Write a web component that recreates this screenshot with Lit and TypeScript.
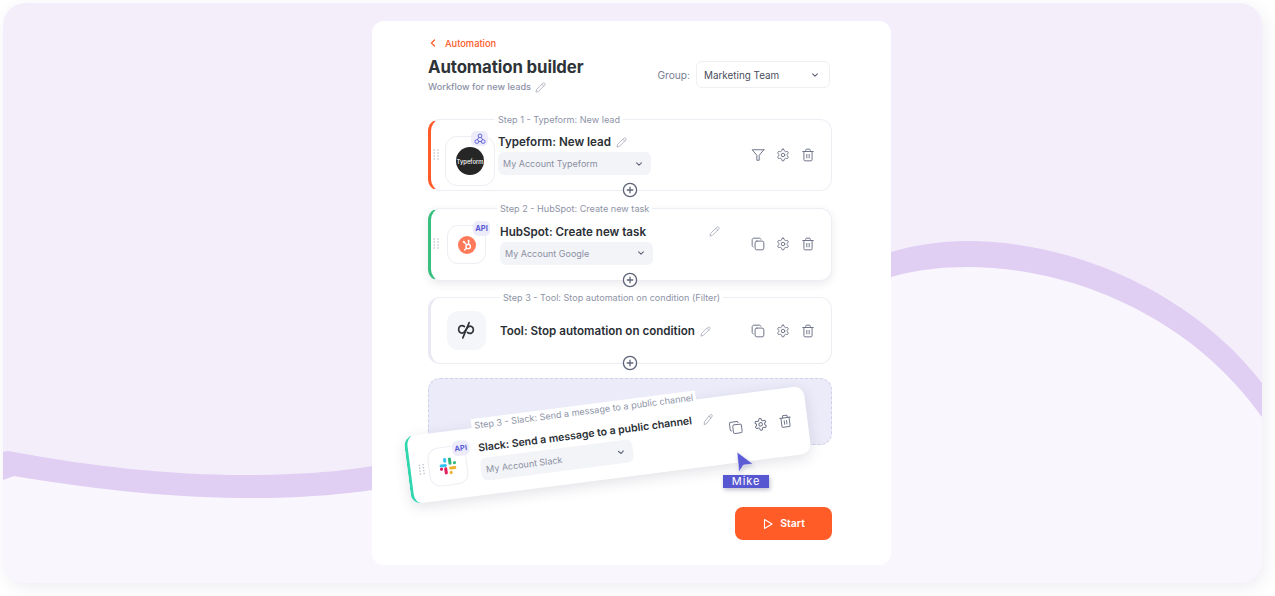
import { LitElement, html, css, svg } from "lit";
import { customElement } from "lit/decorators.js";

const stroke = (body: unknown, cls = "ic") => html`<svg class=${cls} viewBox="0 0 24 24" fill="none" stroke="currentColor" stroke-width="1.7" stroke-linecap="round" stroke-linejoin="round">${body}</svg>`;
const pencil = () => stroke(svg`<path d="M17 3a2.85 2.83 0 1 1 4 4L7.5 20.5 2 22l1.5-5.5Z"/><path d="m15 5 4 4"/>`, "pen");
const gear = () => stroke(svg`<path d="M12.22 2h-.44a2 2 0 0 0-2 2v.18a2 2 0 0 1-1 1.73l-.43.25a2 2 0 0 1-2 0l-.15-.08a2 2 0 0 0-2.73.73l-.22.38a2 2 0 0 0 .73 2.73l.15.1a2 2 0 0 1 1 1.72v.51a2 2 0 0 1-1 1.74l-.15.09a2 2 0 0 0-.73 2.73l.22.38a2 2 0 0 0 2.73.73l.15-.08a2 2 0 0 1 2 0l.43.25a2 2 0 0 1 1 1.73V20a2 2 0 0 0 2 2h.44a2 2 0 0 0 2-2v-.18a2 2 0 0 1 1-1.73l.43-.25a2 2 0 0 1 2 0l.15.08a2 2 0 0 0 2.73-.73l.22-.39a2 2 0 0 0-.73-2.73l-.15-.08a2 2 0 0 1-1-1.74v-.5a2 2 0 0 1 1-1.74l.15-.09a2 2 0 0 0 .73-2.73l-.22-.38a2 2 0 0 0-2.73-.73l-.15.08a2 2 0 0 1-2 0l-.43-.25a2 2 0 0 1-1-1.73V4a2 2 0 0 0-2-2z"/><circle cx="12" cy="12" r="3"/>`);
const trash = () => stroke(svg`<path d="M3 6h18"/><path d="M19 6v14a2 2 0 0 1-2 2H7a2 2 0 0 1-2-2V6"/><path d="M8 6V4a2 2 0 0 1 2-2h4a2 2 0 0 1 2 2v2"/><path d="M10 11v6"/><path d="M14 11v6"/>`);
const copy = () => stroke(svg`<rect x="7" y="7" width="15" height="15" rx="3"/><path d="M3.800 17C2.800 16.600 2 15.600 2 14.500V5c0-1.700 1.300-3 3-3h9.500c1.100 0 2.100.8 2.500 1.800"/>`);
const filter = () => stroke(svg`<polygon points="22 3 2 3 10 12.46 10 21 14 21 14 12.46 22 3"/>`);
const chevron = () => html`<svg class="chev" viewBox="0 0 10 10" fill="none" stroke="currentColor" stroke-width="1.400" stroke-linecap="round" stroke-linejoin="round"><path d="M2 3.500 5 6.500 8 3.500"/></svg>`;
const plus = () => html`<svg class="plus" viewBox="0 0 16 16" fill="#fff" stroke="#5f6479" stroke-width="1.300" stroke-linecap="round"><circle cx="8" cy="8" r="6.600"/><path d="M8 5.200v5.600M5.200 8h5.600"/></svg>`;
const grip = () => html`<svg class="grip" viewBox="0 0 6 10" fill="#b9bdca"><circle cx="1" cy="1" r=".7"/><circle cx="4.400" cy="1" r=".7"/><circle cx="1" cy="3.700" r=".7"/><circle cx="4.400" cy="3.700" r=".7"/><circle cx="1" cy="6.400" r=".7"/><circle cx="4.400" cy="6.400" r=".7"/><circle cx="1" cy="9.100" r=".7"/><circle cx="4.400" cy="9.100" r=".7"/></svg>`;
const hubspot = () => html`<svg class="logo" viewBox="0 0 18 18"><circle cx="9" cy="9" r="9" fill="#ff7a59"/><g fill="none" stroke="#fff" stroke-width="1.400" stroke-linecap="round"><circle cx="10.200" cy="10.400" r="2.200"/><path d="M10.600 8V5.200M6 6 8.600 8.800M8.400 12.200 6.600 14"/></g><circle cx="5.700" cy="5.700" r="1" fill="#fff"/><circle cx="10.600" cy="4.800" r="1" fill="#fff"/></svg>`;
const slack = () => html`<svg class="slack" viewBox="0 0 18 18">
  <rect x="0.200" y="6.600" width="7.800" height="3.200" rx="1.600" fill="#36c5f0"/><rect x="4.800" y="0.200" width="3.200" height="5" rx="1.600" fill="#36c5f0"/>
  <rect x="10" y="0.200" width="3.200" height="7.800" rx="1.600" fill="#2eb67d"/><rect x="14.600" y="4.800" width="3.400" height="3.200" rx="1.600" fill="#2eb67d"/>
  <rect x="10" y="10" width="7.800" height="3.200" rx="1.600" fill="#ecb22e"/><rect x="10" y="14.600" width="3.200" height="3.400" rx="1.600" fill="#ecb22e"/>
  <rect x="4.800" y="10" width="3.200" height="7.800" rx="1.600" fill="#e01e5a"/><rect x="0.200" y="10" width="3.400" height="3.200" rx="1.600" fill="#e01e5a"/>
</svg>`;
const webhook = () => html`<svg class="hook" viewBox="0 0 14 14" fill="none" stroke="#5b5bd6" stroke-width="1.100"><circle cx="7" cy="3.400" r="2.200"/><circle cx="3.300" cy="10" r="2.200"/><circle cx="10.700" cy="10" r="2.200"/><path d="M5.600 5.200 3.800 8M8.400 5.200l1.800 2.800M5.400 10h3.200"/></svg>`;
const stopIcon = () => html`<svg class="stop" viewBox="0 0 20 20" fill="none" stroke="#2f3238" stroke-width="1.600" stroke-linecap="round"><path d="M8 6.200C6.800 5.400 5.400 5.100 4.200 5.800 1.900 7.100 1.900 11 4.300 12.200c2.300 1.100 4-.9 5.200-3 1.200-2.100 3-4.200 5.300-3.100 2.300 1.200 2.400 5 .1 6.200-1.300.7-2.700.4-3.900-.4"/><path d="M12.500 2.500 6.500 17"/></svg>`;

@customElement("app-root")
export class AppRoot extends LitElement {
  static styles = css`
    :host { display: block; width: 1275px; height: 596px; overflow: hidden; background: #fff; font-family: Inter, "Liberation Sans", sans-serif; color: #2b2f36; }
    * { box-sizing: border-box; }
    .frame { margin: 3px 0 0 3px; width: 1259px; height: 580px; border-radius: 22px; box-shadow: 3px 5px 16px rgba(90,70,130,.10); }
    .panel { position: relative; width: 100%; height: 100%; border-radius: 22px; background: #f4eefb; overflow: hidden; display: flow-root; }
    .wave { position: absolute; left: -3px; top: -3px; width: 1275px; height: 596px; }
    .card { position: relative; margin: 18px 0 0 369px; width: 519px; height: 544px; background: #fff; border-radius: 12px; padding: 16px 59px 0 56px; display: flex; flex-direction: column; }
    .back { display: flex; align-items: center; gap: 9px; height: 12px; font-size: 9.300px; font-weight: 500; color: #ff5a27; padding-left: 2px; }
    .back svg { width: 6px; height: 8px; }
    .head { display: flex; justify-content: space-between; align-items: flex-start; margin-top: 7px; }
    h1 { margin: 0; font-size: 16.800px; line-height: 22px; font-weight: 700; color: #2e3338; letter-spacing: -.1px; }
    .sub { display: flex; align-items: center; gap: 4px; margin-top: 3px; font-size: 9.150px; line-height: 12px; font-weight: 500; color: #8b90a5; }
    .pen { width: 11px; height: 11px; color: #a3a7b8; flex: none; }
    .group { display: flex; align-items: center; gap: 6px; margin: 5px 2px 0 0; font-size: 10.200px; color: #7b8095; }
    .gsel { width: 134px; height: 27px; border: 1px solid #eeeff3; border-radius: 6px; display: flex; align-items: center; justify-content: space-between; padding: 0 10px 0 7px; font-size: 9.900px; color: #4a4e5c; }
    .chev { width: 8px; height: 8px; color: #5f6479; flex: none; }
    .steps { display: flex; flex-direction: column; margin-top: 26px; }
    .step { position: relative; display: flex; align-items: center; width: 404px; border: 1px solid #eceef3; border-left-width: 3px; border-radius: 12px; background: #fff; padding-left: 14px; }
    .s1 { height: 72px; margin-bottom: 17px; border-left-color: #ff5a27; }
    .s2 { height: 73px; margin-bottom: 16px; box-shadow: 0 3px 8px rgba(60,60,90,.10); padding-left: 16px; border-left-color: #37bf7f; }
    .s2 .acts { margin-top: -1px; }
    .s3 { height: 67px; margin-bottom: 14px; padding-left: 16px; border-left-color: #e8e9f2; }
    .legend { position: absolute; top: -7px; font-size: 9.100px; line-height: 13px; color: #8e93a6; background: #fff; padding: 0 3px; white-space: nowrap; }
    .s1 .legend { left: 64px; }
    .s2 .legend { left: 66px; }
    .s3 .legend { left: 69px; }
    .grip { position: absolute; width: 7px; height: 11px; left: 2px; top: 29px; }
    .box { position: relative; flex: none; width: 39px; height: 39px; border: 1px solid #eceef3; border-radius: 11px; display: flex; align-items: center; justify-content: center; background: #fff; }
    .big { width: 50px; height: 50px; border-radius: 12px; margin: 12px 3px 0 0; }
    .tool { background: #f5f6f9; border-color: #f5f6f9; margin-right: 14px; }
    .s2 .box { margin-right: 14px; }
    .tf { width: 28px; height: 28px; border-radius: 50%; background: #262626; color: #fff; font-size: 5.800px; font-weight: 500; display: flex; align-items: center; justify-content: center; }
    .logo { width: 18px; height: 18px; }
    .slack { width: 17px; height: 17px; }
    .stop { width: 21px; height: 21px; }
    .badge { position: absolute; right: -5px; top: -5px; height: 15px; min-width: 17px; padding: 0 2px; background: #ececfb; color: #5b5bd6; border-radius: 5px; font-size: 7.500px; font-weight: 700; display: flex; align-items: center; justify-content: center; }
    .hook { width: 12px; height: 12px; }
    .big .badge { right: 6px; top: -6px; }
    .body { display: flex; flex-direction: column; gap: 2px; margin-top: -2px; }
    .title { display: flex; align-items: center; padding-top: 1px; font-size: 11.600px; line-height: 16px; font-weight: 600; color: #2b2f36; white-space: nowrap; }
    .title .pen { margin-left: 5px; }
    .wide { width: 220px; justify-content: space-between; }
    .sel { width: 153px; height: 23px; border-radius: 6px; background: #f3f4f7; display: flex; align-items: center; justify-content: space-between; padding: 0 8px 0 5px; font-size: 9px; color: #8a8fa3; }
    .acts { position: absolute; right: 16px; top: 50%; transform: translateY(-50%); display: flex; gap: 11px; color: #6f7489; }
    .ic { width: 14px; height: 14px; display: block; }
    .plus { position: absolute; left: 190.500px; bottom: -8px; width: 16px; height: 16px; z-index: 2; }
    .drop { height: 67px; width: 404px; border: 1px dashed #cfcfe8; border-radius: 12px; background: #ebebf9; }
    .footer { display: flex; justify-content: flex-end; margin-top: 62px; }
    .start { width: 97px; height: 33px; border-radius: 8px; background: #ff5c28; color: #fff; border: 0; font: 600 10.500px Inter, "Liberation Sans", sans-serif; display: flex; align-items: center; justify-content: center; gap: 6px; }
    .start svg { width: 12px; height: 12px; }
    .drag { position: absolute; left: 34px; top: 390px; width: 403px; height: 68px; transform: rotate(-7.300deg); background: #fff; border-left: 3px solid #2fd6ae; border-radius: 10px; box-shadow: 0 4px 14px rgba(60,60,90,.14); display: flex; align-items: center; padding-left: 18px; z-index: 3; }
    .drag .box { margin-right: 13px; }
    .drag .legend { left: 66px; top: -9px; }
    .drag .grip { left: 8px; top: 29px; }
    .drag .title { font-size: 10.500px; }
    .dp { position: absolute; left: 296px; top: 11px; }
    .drag .acts { right: 15px; top: 48%; }
    .cursor { position: absolute; left: 351px; top: 431px; z-index: 4; display: flex; flex-direction: column; }
    .cursor svg { width: 18px; height: 21px; margin-left: 13px; display: block; filter: drop-shadow(1px 2px 2px rgba(40,40,90,.2)); }
    .mike { width: 46px; height: 13px; margin-top: 2px; background: #5757d1; color: #fff; font-size: 11px; line-height: 13px; letter-spacing: .9px; text-align: center; box-shadow: 1px 2px 4px rgba(40,40,90,.3); }
  `;

  render() {
    return html`<div class="frame"><div class="panel">
      <svg class="wave" viewBox="0 0 1275 596">
        <path fill="#f9f6fe" d="M0 481 L14 476 C110 492 190 499 270 498 C310 497 345 494 372 490 C560 450 700 340 891 277 C915 270 940 267 968 267 C1070 267 1190 315 1262 417 L1275 596 L0 596 Z"/>
        <path fill="#e0cef3" d="M0 452 L8 451 C110 470 200 478 290 474 C320 473 350 470 372 466 C560 426 700 312 891 252 C915 245 940 241 968 241 C1070 241 1190 290 1262 383 L1275 420 L1262 417 C1190 315 1070 267 968 267 C940 267 915 270 891 277 C700 340 560 450 372 490 C345 494 310 497 270 498 C190 499 110 492 14 476 L0 481 Z"/>
      </svg>
      <div class="card">
        <div class="back"><svg viewBox="0 0 6 8" fill="none" stroke="currentColor" stroke-width="1.300" stroke-linecap="round" stroke-linejoin="round"><path d="M4.500 1 1.500 4l3 3"/></svg>Automation</div>
        <div class="head">
          <div>
            <h1>Automation builder</h1>
            <div class="sub">Workflow for new leads ${pencil()}</div>
          </div>
          <div class="group">Group:
            <div class="gsel">Marketing Team ${chevron()}</div>
          </div>
        </div>
        <div class="steps">
          <div class="step s1">
            <span class="legend">Step 1 - Typeform: New lead</span>
            ${grip()}
            <div class="box big"><div class="tf">Typeform</div><span class="badge">${webhook()}</span></div>
            <div class="body">
              <div class="title">Typeform: New lead ${pencil()}</div>
              <div class="sel">My Account Typeform ${chevron()}</div>
            </div>
            <div class="acts">${filter()}${gear()}${trash()}</div>
            ${plus()}
          </div>
          <div class="step s2">
            <span class="legend">Step 2 - HubSpot: Create new task</span>
            ${grip()}
            <div class="box">${hubspot()}<span class="badge">API</span></div>
            <div class="body">
              <div class="title wide">HubSpot: Create new task ${pencil()}</div>
              <div class="sel">My Account Google ${chevron()}</div>
            </div>
            <div class="acts">${copy()}${gear()}${trash()}</div>
            ${plus()}
          </div>
          <div class="step s3">
            <span class="legend">Step 3 - Tool: Stop automation on condition (Filter)</span>
            <div class="box tool">${stopIcon()}</div>
            <div class="title">Tool: Stop automation on condition ${pencil()}</div>
            <div class="acts">${copy()}${gear()}${trash()}</div>
            ${plus()}
          </div>
          <div class="drop"></div>
        </div>
        <div class="footer">
          <button class="start"><svg viewBox="0 0 12 12" fill="none" stroke="#fff" stroke-width="1.100" stroke-linejoin="round"><path d="M2.500 1.500 10 6l-7.500 4.500z"/></svg>Start</button>
        </div>
        <div class="drag">
          <span class="legend">Step 3 - Slack: Send a message to a public channel</span>
          ${grip()}
          <div class="box">${slack()}<span class="badge">API</span></div>
          <div class="body">
            <div class="title">Slack: Send a message to a public channel</div>
            <div class="sel">My Account Slack ${chevron()}</div>
          </div>
          <span class="dp">${pencil()}</span>
          <div class="acts">${copy()}${gear()}${trash()}</div>
        </div>
        <div class="cursor">
          <svg viewBox="0 0 18 21"><path d="M1 0 17 12 7.500 13 3 20z" fill="#5b5bd6" stroke="#fff" stroke-width=".5"/></svg>
          <div class="mike">Mike</div>
        </div>
      </div>
    </div></div>`;
  }
}
